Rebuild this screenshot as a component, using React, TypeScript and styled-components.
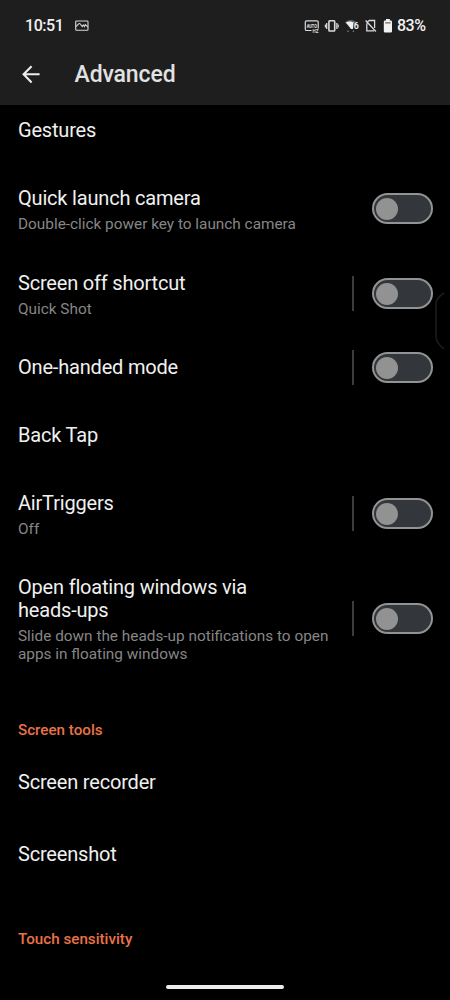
import React from "react";
import styled, { createGlobalStyle } from "styled-components";

const GlobalStyle = createGlobalStyle`
  body {
    margin: 0;
    background: #000;
    font-family: Roboto, "Liberation Sans", sans-serif;
  }
`;

const Screen = styled.div`
  position: relative;
  display: flex;
  flex-direction: column;
  width: 450px;
  height: 1000px;
  overflow: hidden;
  background: #000;
`;

const Header = styled.header`
  flex: none;
  height: 105px;
  background: #1e1e1e;
`;

const StatusBar = styled.div`
  display: flex;
  align-items: center;
  height: 44px;
  padding: 7px 25px 0 25px;
  box-sizing: border-box;
`;

const Clock = styled.span`
  width: 50px;
  font-size: 16px;
  font-weight: 500;
  letter-spacing: -0.45px;
  line-height: 20px;
  color: #f2f2f2;
`;

const StatusIcons = styled.div`
  display: flex;
  align-items: center;
  margin-left: auto;
`;

const Battery = styled.span`
  width: 28px;
  font-size: 16px;
  font-weight: 500;
  letter-spacing: -0.5px;
  line-height: 20px;
  white-space: nowrap;
  color: #f2f2f2;
`;

const TitleBar = styled.div`
  display: flex;
  align-items: center;
  height: 60px;
  padding-left: 21px;
`;

const Title = styled.h1`
  margin: 0 0 0 33.5px;
  padding-top: 2px;
  font-size: 23px;
  font-weight: 500;
  letter-spacing: -0.12px;
  line-height: 28px;
  color: #e2e2e2;
`;

const List = styled.main`
  flex: 1;
  display: flex;
  flex-direction: column;
`;

const Row = styled.div<{ $height: number }>`
  flex: none;
  display: flex;
  align-items: center;
  height: ${(p) => p.$height}px;
  padding: 0 17px 0 18px;
  box-sizing: border-box;
`;

const Labels = styled.div<{ $offset: number }>`
  width: 320px;
  padding-top: ${(p) => p.$offset}px;
`;

const Label = styled.div`
  max-width: 260px;
  font-size: 20px;
  letter-spacing: -0.19px;
  line-height: 23px;
  color: #f0f0f0;
  font-variant-ligatures: common-ligatures;
`;

const Summary = styled.div`
  margin-top: 5px;
  font-size: 15.35px;
  line-height: 18px;
  color: #868686;
`;

const SectionTitle = styled.h2<{ $gap: number }>`
  flex: none;
  margin: ${(p) => p.$gap}px 0 0;
  padding-left: 18px;
  font-size: 15.2px;
  font-weight: 500;
  line-height: 60px;
  color: #e87345;
`;

const Controls = styled.div`
  display: flex;
  align-items: center;
  gap: 18px;
  margin-left: auto;
`;

const Divider = styled.span`
  width: 2px;
  height: 35px;
  background: #3c3c3c;
`;

const Toggle = styled.button`
  display: flex;
  align-items: center;
  width: 61px;
  height: 31px;
  padding: 0 0 0 2px;
  border: 2px solid #929394;
  border-radius: 16px;
  background: #33363a;
`;

const Knob = styled.span`
  width: 22px;
  height: 22px;
  border-radius: 50%;
  background: #929292;
`;

const EdgeHandle = styled.svg`
  position: absolute;
  right: 0;
  top: 290px;
`;

const HomeBar = styled.div`
  position: absolute;
  left: 166px;
  top: 984.5px;
  width: 118px;
  height: 4.5px;
  border-radius: 3px;
  background: #ececec;
`;

const PictureIcon = () => (
  <svg width="14" height="12" viewBox="0 0 14 12" fill="none" stroke="#d8d8d8">
    <rect x="0.7" y="1" width="12.3" height="9.2" rx="0.8" strokeWidth="1.1" />
    <path d="M1 6.6 L3.6 3.8 Q4.5 3 5.3 4 L7.2 6.6 L8.3 5 L9.4 6.6 L10.4 4.6 L13 7.1" strokeWidth="1.1" />
  </svg>
);

const SystemIcons = () => (
  <svg width="93" height="20" viewBox="304 15.5 93 20">
    <g fill="none" stroke="#dadada" strokeWidth="1.2">
      <path d="M311.5 30 H306.6 Q305.3 30 305.3 28.7 V21.6 Q305.3 20.3 306.6 20.3 H316.9 Q318.2 20.3 318.2 21.6 V28" />
      <rect x="328.9" y="20.3" width="5.8" height="10.2" rx="0.8" strokeWidth="1.6" />
      <path d="M326.7 22.5 V28.5 M336.9 22.5 V28.5" strokeWidth="1.3" />
      <path d="M325.4 24 V27 M338.2 24 V27" strokeWidth="1.2" />
      <path d="M369 20 H374.6 V27.6 M366.8 22.8 V30.4 H374 M367.6 21.4 L369 20 M365.6 20 L375.9 31" strokeWidth="1.3" />
    </g>
    <text x="306.7" y="27.2" fontSize="5.8" fontWeight="700" textLength="10.2" lengthAdjust="spacingAndGlyphs" fill="#e4e4e4">AUTO</text>
    <text x="312.6" y="32.3" fontSize="5" fontWeight="700" textLength="6" lengthAdjust="spacingAndGlyphs" fill="#dadada">HZ</text>
    <path d="M345 21.8 Q350.5 17.4 356 21.2 L354.8 23 H346.2 Z" fill="#666" />
    <path d="M345.8 22 Q349.8 20 353.6 22 L353 28.6 H351 Z" fill="#f0f0f0" />
    <path d="M347 31.2 L348 29.4 L349 31.2 Z M352.4 31.2 L353.4 29.4 L354.4 31.2 Z" fill="#858585" />
    <text x="353.8" y="28.9" fontSize="8.8" fontWeight="700" fill="#efefef">6</text>
    <path d="M386 18.6 H389.8 V20.1 H390.8 Q392 20.1 392 21.3 V30.7 Q392 31.9 390.8 31.9 H385 Q383.8 31.9 383.8 30.7 V21.3 Q383.8 20.1 385 20.1 H386 Z" fill="#f2f2f2" />
    <path d="M385.2 22.4 H390.6" stroke="#4a4a4a" strokeWidth="1" />
  </svg>
);

const BackArrow = () => (
  <svg width="20" height="20" viewBox="0 0 20 20" fill="none" stroke="#ededed" strokeWidth="2.1">
    <path d="M18.6 10.3 H3 M10.6 2.2 L2.6 10.3 L10.6 18.4" />
  </svg>
);

type SettingProps = {
  height: number;
  label: string;
  summary?: string;
  toggle?: boolean;
  divided?: boolean;
};

const Setting = ({ height, label, summary, toggle, divided }: SettingProps) => (
  <Row $height={height}>
    <Labels $offset={summary ? 2 : 0}>
      <Label>{label}</Label>
      {summary && <Summary>{summary}</Summary>}
    </Labels>
    {toggle && (
      <Controls>
        {divided && <Divider />}
        <Toggle role="switch" aria-checked={false} aria-label={label}>
          <Knob />
        </Toggle>
      </Controls>
    )}
  </Row>
);

export default function App() {
  return (
    <Screen>
      <GlobalStyle />
      <Header>
        <StatusBar>
          <Clock>10:51</Clock>
          <PictureIcon />
          <StatusIcons>
            <SystemIcons />
            <Battery>83%</Battery>
          </StatusIcons>
        </StatusBar>
        <TitleBar>
          <BackArrow />
          <Title>Advanced</Title>
        </TitleBar>
      </Header>
      <List>
        <Setting height={51} label="Gestures" />
        <Setting height={105} label="Quick launch camera" summary="Double-click power key to launch camera" toggle />
        <Setting height={65} label="Screen off shortcut" summary="Quick Shot" toggle divided />
        <Setting height={83} label="One-handed mode" toggle divided />
        <Setting height={52} label="Back Tap" />
        <Setting height={105} label="AirTriggers" summary="Off" toggle divided />
        <Setting height={105} label="Open floating windows via heads-ups" summary="Slide down the heads-up notifications to open apps in floating windows" toggle divided />
        <SectionTitle $gap={29}>Screen tools</SectionTitle>
        <Setting height={45} label="Screen recorder" />
        <Setting height={99} label="Screenshot" />
        <SectionTitle $gap={5}>Touch sensitivity</SectionTitle>
      </List>
      <EdgeHandle width="16" height="62" viewBox="0 0 16 62" fill="none" stroke="#1c1c1c" strokeWidth="1.5">
        <path d="M10 3 Q2 8 2 14 V46 Q2 53 10 59" />
      </EdgeHandle>
      <HomeBar />
    </Screen>
  );
}
